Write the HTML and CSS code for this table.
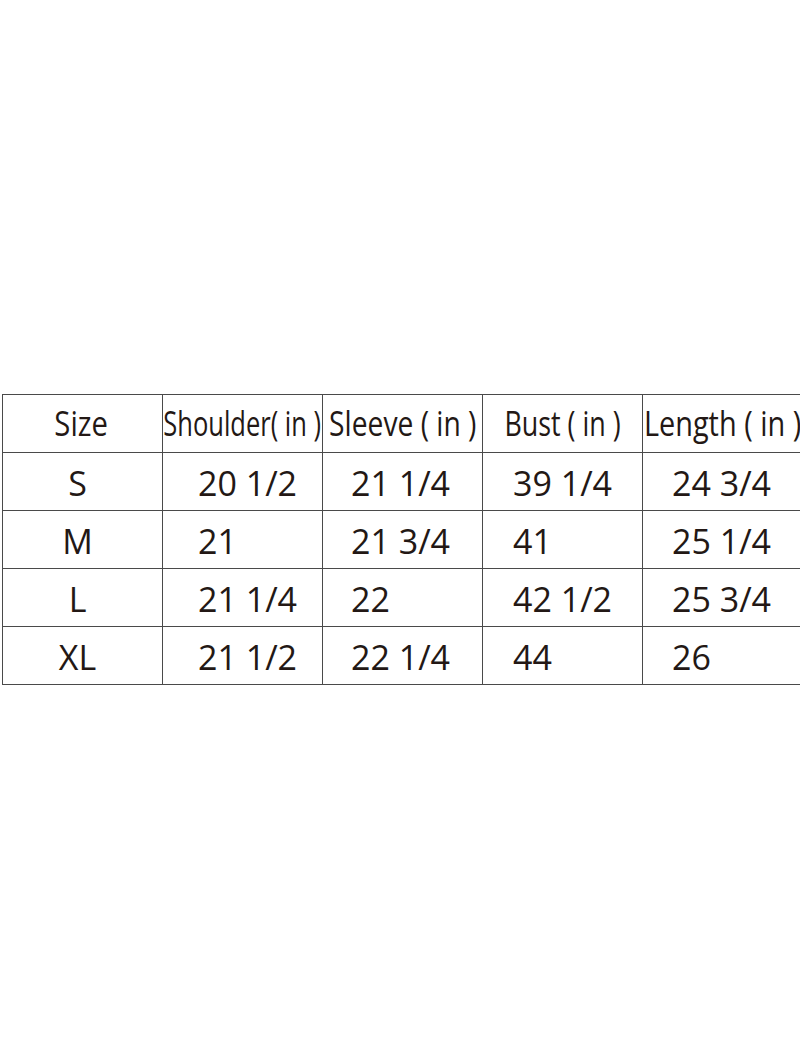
FILE: index.html
```html
<!DOCTYPE html>
<html>
<head>
<meta charset="utf-8">
<link rel="stylesheet" href="styles.css">
</head>
<body>
<div class="chart">
  <div class="cell head"><span class="sq s-size">Size</span></div>
  <div class="cell head"><span class="sq s-shoulder">Shoulder( in )</span></div>
  <div class="cell head"><span class="sq s-sleeve">Sleeve ( in )</span></div>
  <div class="cell head"><span class="sq s-bust">Bust ( in )</span></div>
  <div class="cell head"><span class="sq s-length">Length ( in )</span></div>

  <div class="cell size">S</div>
  <div class="cell v c2">20 1/2</div>
  <div class="cell v c3">21 1/4</div>
  <div class="cell v c4">39 1/4</div>
  <div class="cell v c5">24 3/4</div>

  <div class="cell size">M</div>
  <div class="cell v c2">21</div>
  <div class="cell v c3">21 3/4</div>
  <div class="cell v c4">41</div>
  <div class="cell v c5">25 1/4</div>

  <div class="cell size">L</div>
  <div class="cell v c2">21 1/4</div>
  <div class="cell v c3">22</div>
  <div class="cell v c4">42 1/2</div>
  <div class="cell v c5">25 3/4</div>

  <div class="cell size">XL</div>
  <div class="cell v c2">21 1/2</div>
  <div class="cell v c3">22 1/4</div>
  <div class="cell v c4">44</div>
  <div class="cell v c5">26</div>
</div>
</body>
</html>
```

FILE: styles.css
```css
html, body {
  margin: 0;
  padding: 0;
  background: #ffffff;
  overflow: hidden;
}
body {
  width: 800px;
  height: 1050px;
  font-family: "Open Sans", "Noto Sans", sans-serif;
  color: #231815;
}
.chart {
  display: grid;
  grid-template-columns: repeat(5, 159px);
  grid-auto-rows: 57px;
  gap: 1px;
  background: #4a4a4a;
  border: 1px solid #4a4a4a;
  width: max-content;
  margin: 394px 0 0 2px;
}
.cell {
  background: #ffffff;
  font-size: 34px;
  white-space: nowrap;
  overflow: visible;
}
.head {
  display: flex;
  justify-content: center;
  align-items: flex-start;
  line-height: 57px;
}
.sq {
  display: inline-block;
  transform-origin: center;
}
.s-size { transform: scaleX(0.86); margin-left: -3px; }
.s-shoulder { transform: scaleX(0.75); }
.s-sleeve { transform: scaleX(0.83); }
.s-bust { transform: scaleX(0.79); }
.s-length { transform: scaleX(0.85); }
.v, .size {
  padding-top: 4px;
  line-height: 53px;
  height: 53px;
}
.size {
  text-align: center;
  padding-right: 10px;
}
.c2 { padding-left: 35px; }
.c3 { padding-left: 28px; }
.c4 { padding-left: 30px; }
.c5 { padding-left: 29px; }
```
